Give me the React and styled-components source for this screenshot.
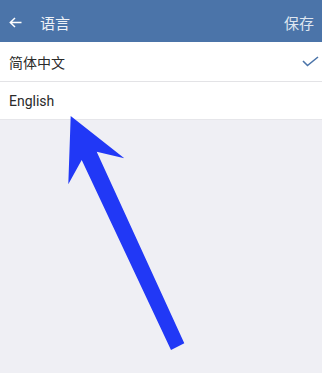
import React from "react";
import styled, { createGlobalStyle } from "styled-components";

const Global = createGlobalStyle`
  html, body { margin: 0; padding: 0; }
  body { background: #efeff4; font-family: "Noto Sans CJK SC", "Noto Sans", sans-serif; }
`;

const Page = styled.div`
  position: relative;
  width: 322px;
  height: 373px;
  background: #efeff4;
  overflow: hidden;
`;

const Header = styled.header`
  height: 42px;
  background: #4b74a9;
  display: flex;
  align-items: center;
  padding: 3px 8px 0 9px;
  box-sizing: border-box;
  color: #fff;
`;

const Back = styled.svg`
  width: 13px;
  height: 11px;
  margin-right: 18px;
`;

const Title = styled.div`
  font-size: 15px;
  color: #eef2f8;
  flex: 1;
`;

const Save = styled.div`
  font-size: 15px;
  color: #dfe6f0;
`;

const List = styled.div`
  background: #fff;
`;

const Row = styled.div`
  height: ${(p) => p.$h}px;
  display: flex;
  align-items: center;
  justify-content: space-between;
  padding: 0 3px 0 9px;
  box-sizing: border-box;
  border-bottom: 1px solid ${(p) => (p.$last ? "#e6e6ea" : "#e3e3e6")};
  font-size: 14px;
  color: #2a2a2a;
  font-family: ${(p) => (p.$latin ? '"Roboto", "Noto Sans", sans-serif' : '"Noto Sans CJK SC", sans-serif')};
`;

const Check = styled.svg`
  width: 17px;
  height: 11px;
`;

const Pointer = styled.svg`
  position: absolute;
  left: 0;
  top: 0;
  width: 322px;
  height: 373px;
  pointer-events: none;
`;

export default function App() {
  return (
    <Page>
      <Global />
      <Header>
        <Back viewBox="0 0 13 11">
          <path d="M12.5 5.5H1.5M6 1L1.3 5.5L6 10" fill="none" stroke="#fff" strokeWidth="1.5" />
        </Back>
        <Title>语言</Title>
        <Save>保存</Save>
      </Header>
      <List>
        <Row $h={40}>
          <span>简体中文</span>
          <Check viewBox="0 0 17 11">
            <path d="M1 5L5.5 9.5L16 1" fill="none" stroke="#4b74a9" strokeWidth="1.6" />
          </Check>
        </Row>
        <Row $h={38} $latin $last>
          <span>English</span>
        </Row>
      </List>
      <Pointer viewBox="0 0 322 373">
        <polygon
          points="70.7,116 124.3,158.3 96.7,151.7 184.3,343.3 171,350 81.7,160 68.3,184.3"
          fill="#2138f6"
        />
      </Pointer>
    </Page>
  );
}
